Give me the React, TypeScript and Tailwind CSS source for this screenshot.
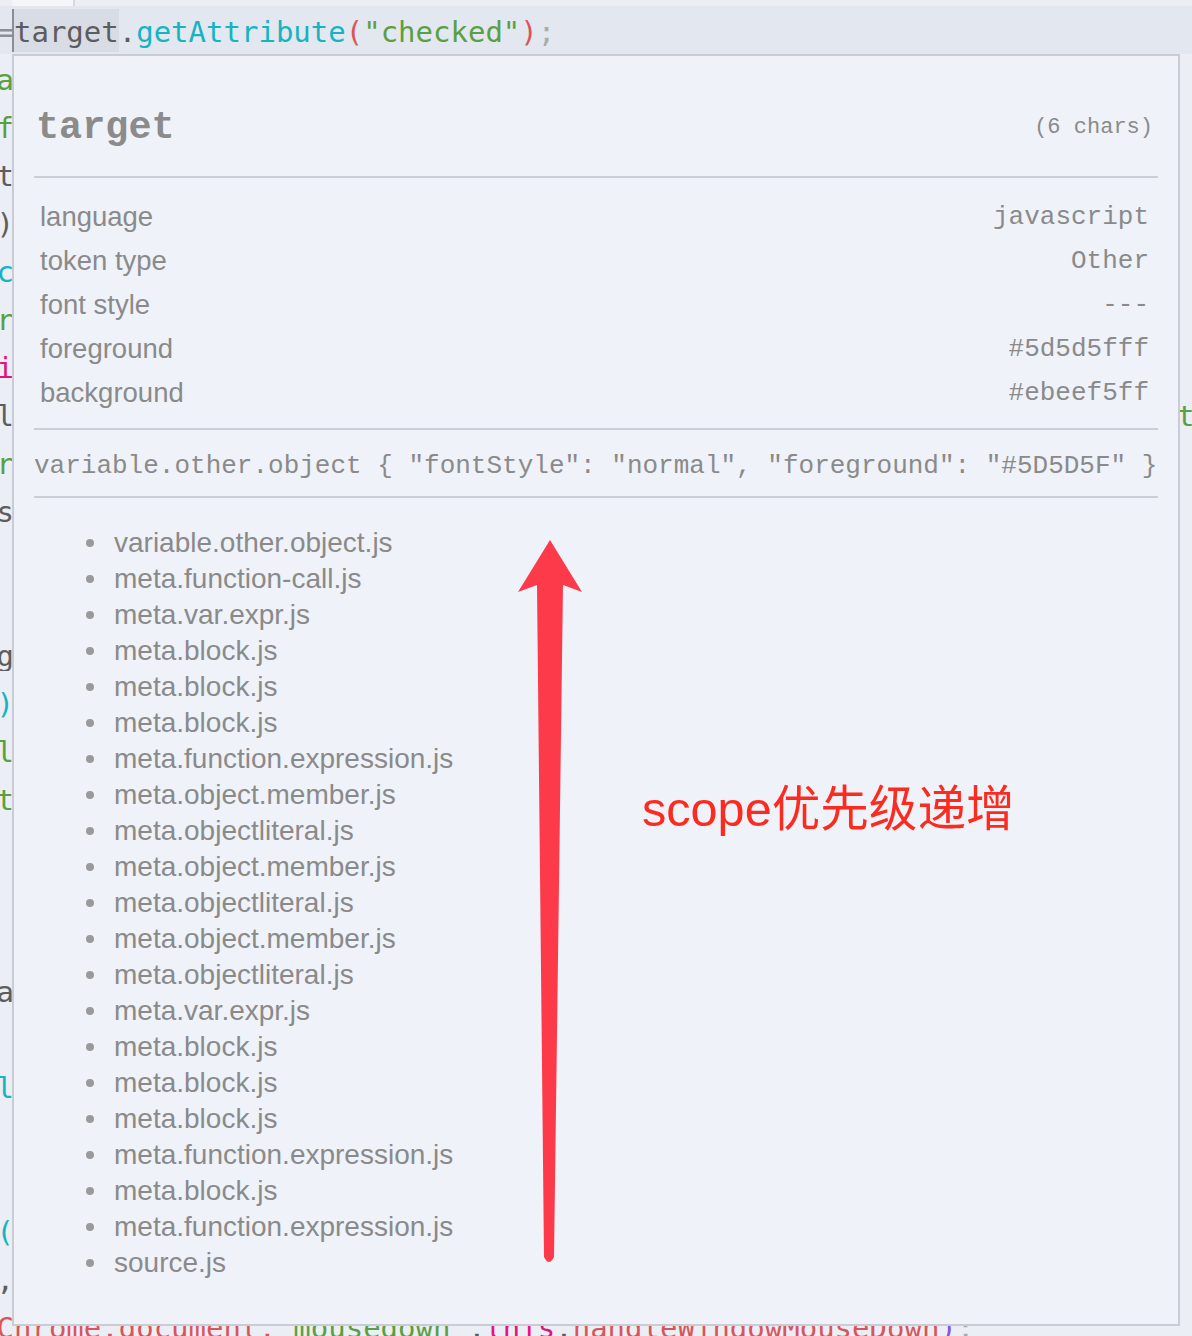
type Tok = [string, string];

const C = {
  dark: "text-[#5d5d5f]",
  green: "text-[#5aa043]",
  cyan: "text-[#16b4c3]",
  magenta: "text-[#e4127c]",
  red: "text-[#d9555a]",
  purple: "text-[#8a4fe0]",
  gray: "text-[#a9abb0]",
};

// what is left of each code line at the edges of the hover panel
const edges: { l?: Tok; r?: Tok }[] = [
  { l: ["a", C.green] },
  { l: ["f", C.green] },
  { l: ["t", C.dark] },
  { l: [")", C.dark] },
  { l: ["c", C.cyan] },
  { l: ["r", C.green] },
  { l: ["i", C.magenta] },
  { l: ["l", C.dark], r: ["t", C.green] },
  { l: ["r", C.green] },
  { l: ["s", C.dark] },
  {},
  {},
  { l: ["g", C.dark] },
  { l: [")", C.cyan] },
  { l: ["l", C.green] },
  { l: ["t", C.green] },
  {},
  {},
  {},
  { l: ["a", C.dark] },
  {},
  { l: ["l", C.cyan] },
  {},
  {},
  { l: ["(", C.cyan] },
  { l: [",", C.dark] },
];

const bottomLine: Tok[] = [
  ["Chrome.document,", C.red],
  ['"mousedown"', C.green],
  [",", C.dark],
  ["this", C.magenta],
  [".", C.dark],
  ["handleWindowMouseDown", C.red],
  [")", C.purple],
  [";", C.gray],
];

const info: [string, string][] = [
  ["language", "javascript"],
  ["token type", "Other"],
  ["font style", "---"],
  ["foreground", "#5d5d5fff"],
  ["background", "#ebeef5ff"],
];

const scopes = [
  "variable.other.object.js",
  "meta.function-call.js",
  "meta.var.expr.js",
  "meta.block.js",
  "meta.block.js",
  "meta.block.js",
  "meta.function.expression.js",
  "meta.object.member.js",
  "meta.objectliteral.js",
  "meta.object.member.js",
  "meta.objectliteral.js",
  "meta.object.member.js",
  "meta.objectliteral.js",
  "meta.var.expr.js",
  "meta.block.js",
  "meta.block.js",
  "meta.block.js",
  "meta.function.expression.js",
  "meta.block.js",
  "meta.function.expression.js",
  "source.js",
];

function HoverPanel() {
  return (
    <div className="absolute left-[12px] top-[54px] w-[1168px] h-[1272px] border-2 border-[#c9ccd4] bg-[#eff2f9] text-[#8a8a8a]">
      <div className="h-[120px] pt-[24px] pl-[22px] pr-[25px] flex items-center justify-between">
        <span className="font-['Liberation_Mono',monospace] font-bold text-[38.5px] leading-none text-[#8b8b8b]">
          target
        </span>
        <span className="font-['Liberation_Mono',monospace] text-[22px] leading-none">
          (6 chars)
        </span>
      </div>
      <div className="mx-[20px] h-[2px] bg-[#cbced6]" />

      <div className="pt-[17px] pb-[13px]">
        {info.map(([k, v]) => (
          <div key={k} className="h-[44px] pl-[26px] pr-[29px] flex items-center justify-between">
            <span className="font-['Liberation_Sans',sans-serif] text-[27.5px] leading-none">{k}</span>
            <span className="font-['Liberation_Mono',monospace] text-[26px] leading-none">{v}</span>
          </div>
        ))}
      </div>
      <div className="mx-[20px] h-[2px] bg-[#cbced6]" />

      <div className="h-[66px] pt-[5px] pl-[20px] flex items-center font-['Liberation_Mono',monospace] text-[26px] leading-none whitespace-pre">
        {'variable.other.object { "fontStyle": "normal", "foreground": "#5D5D5F" }'}
      </div>
      <div className="mx-[20px] h-[2px] bg-[#cbced6]" />

      <ul className="pt-[27px] pl-[72px]">
        {scopes.map((s, i) => (
          <li key={i} className="h-[36px] flex items-center gap-[20px]">
            <span className="w-[8px] h-[8px] rounded-full bg-[#9a9a9a]" />
            <span className="font-['Liberation_Sans',sans-serif] text-[28px] leading-none">{s}</span>
          </li>
        ))}
      </ul>
    </div>
  );
}

export default function App() {
  return (
    <div className="relative w-[1192px] h-[1336px] overflow-hidden bg-[#ebeef5] font-['DejaVu_Sans_Mono',monospace] text-[29px] leading-none">
      <div className="h-[6px] flex">
        <div className="ml-[12px] w-[63px] bg-[#f4f6fa] border-r-2 border-[#d6d9e0]" />
      </div>

      {/* current line */}
      <div className="h-[48px] bg-[#e3e7ef] flex items-center whitespace-pre">
        <div className="-ml-[3.5px] flex items-center">
          <span className="pt-[4px] text-[#8d8f94]">=</span>
          <span className="-ml-[2px] h-[43px] pt-[4px] flex items-center border-l-2 border-[#8c8e93] bg-[#d8dce4] text-[#5d5d5f]">
            target
          </span>
          <span className="pt-[4px] flex">
            <span className="text-[#5d5d5f]">.</span>
            <span className={C.cyan}>getAttribute</span>
            <span className={C.red}>(</span>
            <span className={C.green}>"checked"</span>
            <span className={C.red}>)</span>
            <span className={C.gray}>;</span>
          </span>
        </div>
      </div>

      {edges.map((e, i) => (
        <div key={i} className="h-[48px] pt-[5px] flex items-center justify-between">
          <div className="w-[12px] overflow-hidden">
            {e.l && <span className={`-ml-[3.5px] block ${e.l[1]}`}>{e.l[0]}</span>}
          </div>
          <div className="w-[12px] overflow-hidden">
            {e.r && <span className={`-ml-[3px] block ${e.r[1]}`}>{e.r[0]}</span>}
          </div>
        </div>
      ))}

      <div className="h-[48px] pt-[5px] flex items-center whitespace-pre">
        <div className="-ml-[3.5px]">
          {bottomLine.map(([t, c], i) => (
            <span key={i} className={c}>
              {t}
            </span>
          ))}
        </div>
      </div>

      <HoverPanel />

      <svg className="absolute left-0 top-0 pointer-events-none" width="1192" height="1336" viewBox="0 0 1192 1336">
        <path
          d="M550 540 L582 592 L563 585 L554 1257 Q549 1267 544 1257 L537 585 L518 592 Z"
          fill="#fd3a4a"
        />
      </svg>
      <div className="absolute left-[642px] top-[781px] h-[56px] flex items-center font-['Liberation_Sans','Noto_Sans_CJK_SC',sans-serif] text-[48.6px] text-[#fb2b20] whitespace-nowrap">
        scope优先级递增
      </div>
    </div>
  );
}
